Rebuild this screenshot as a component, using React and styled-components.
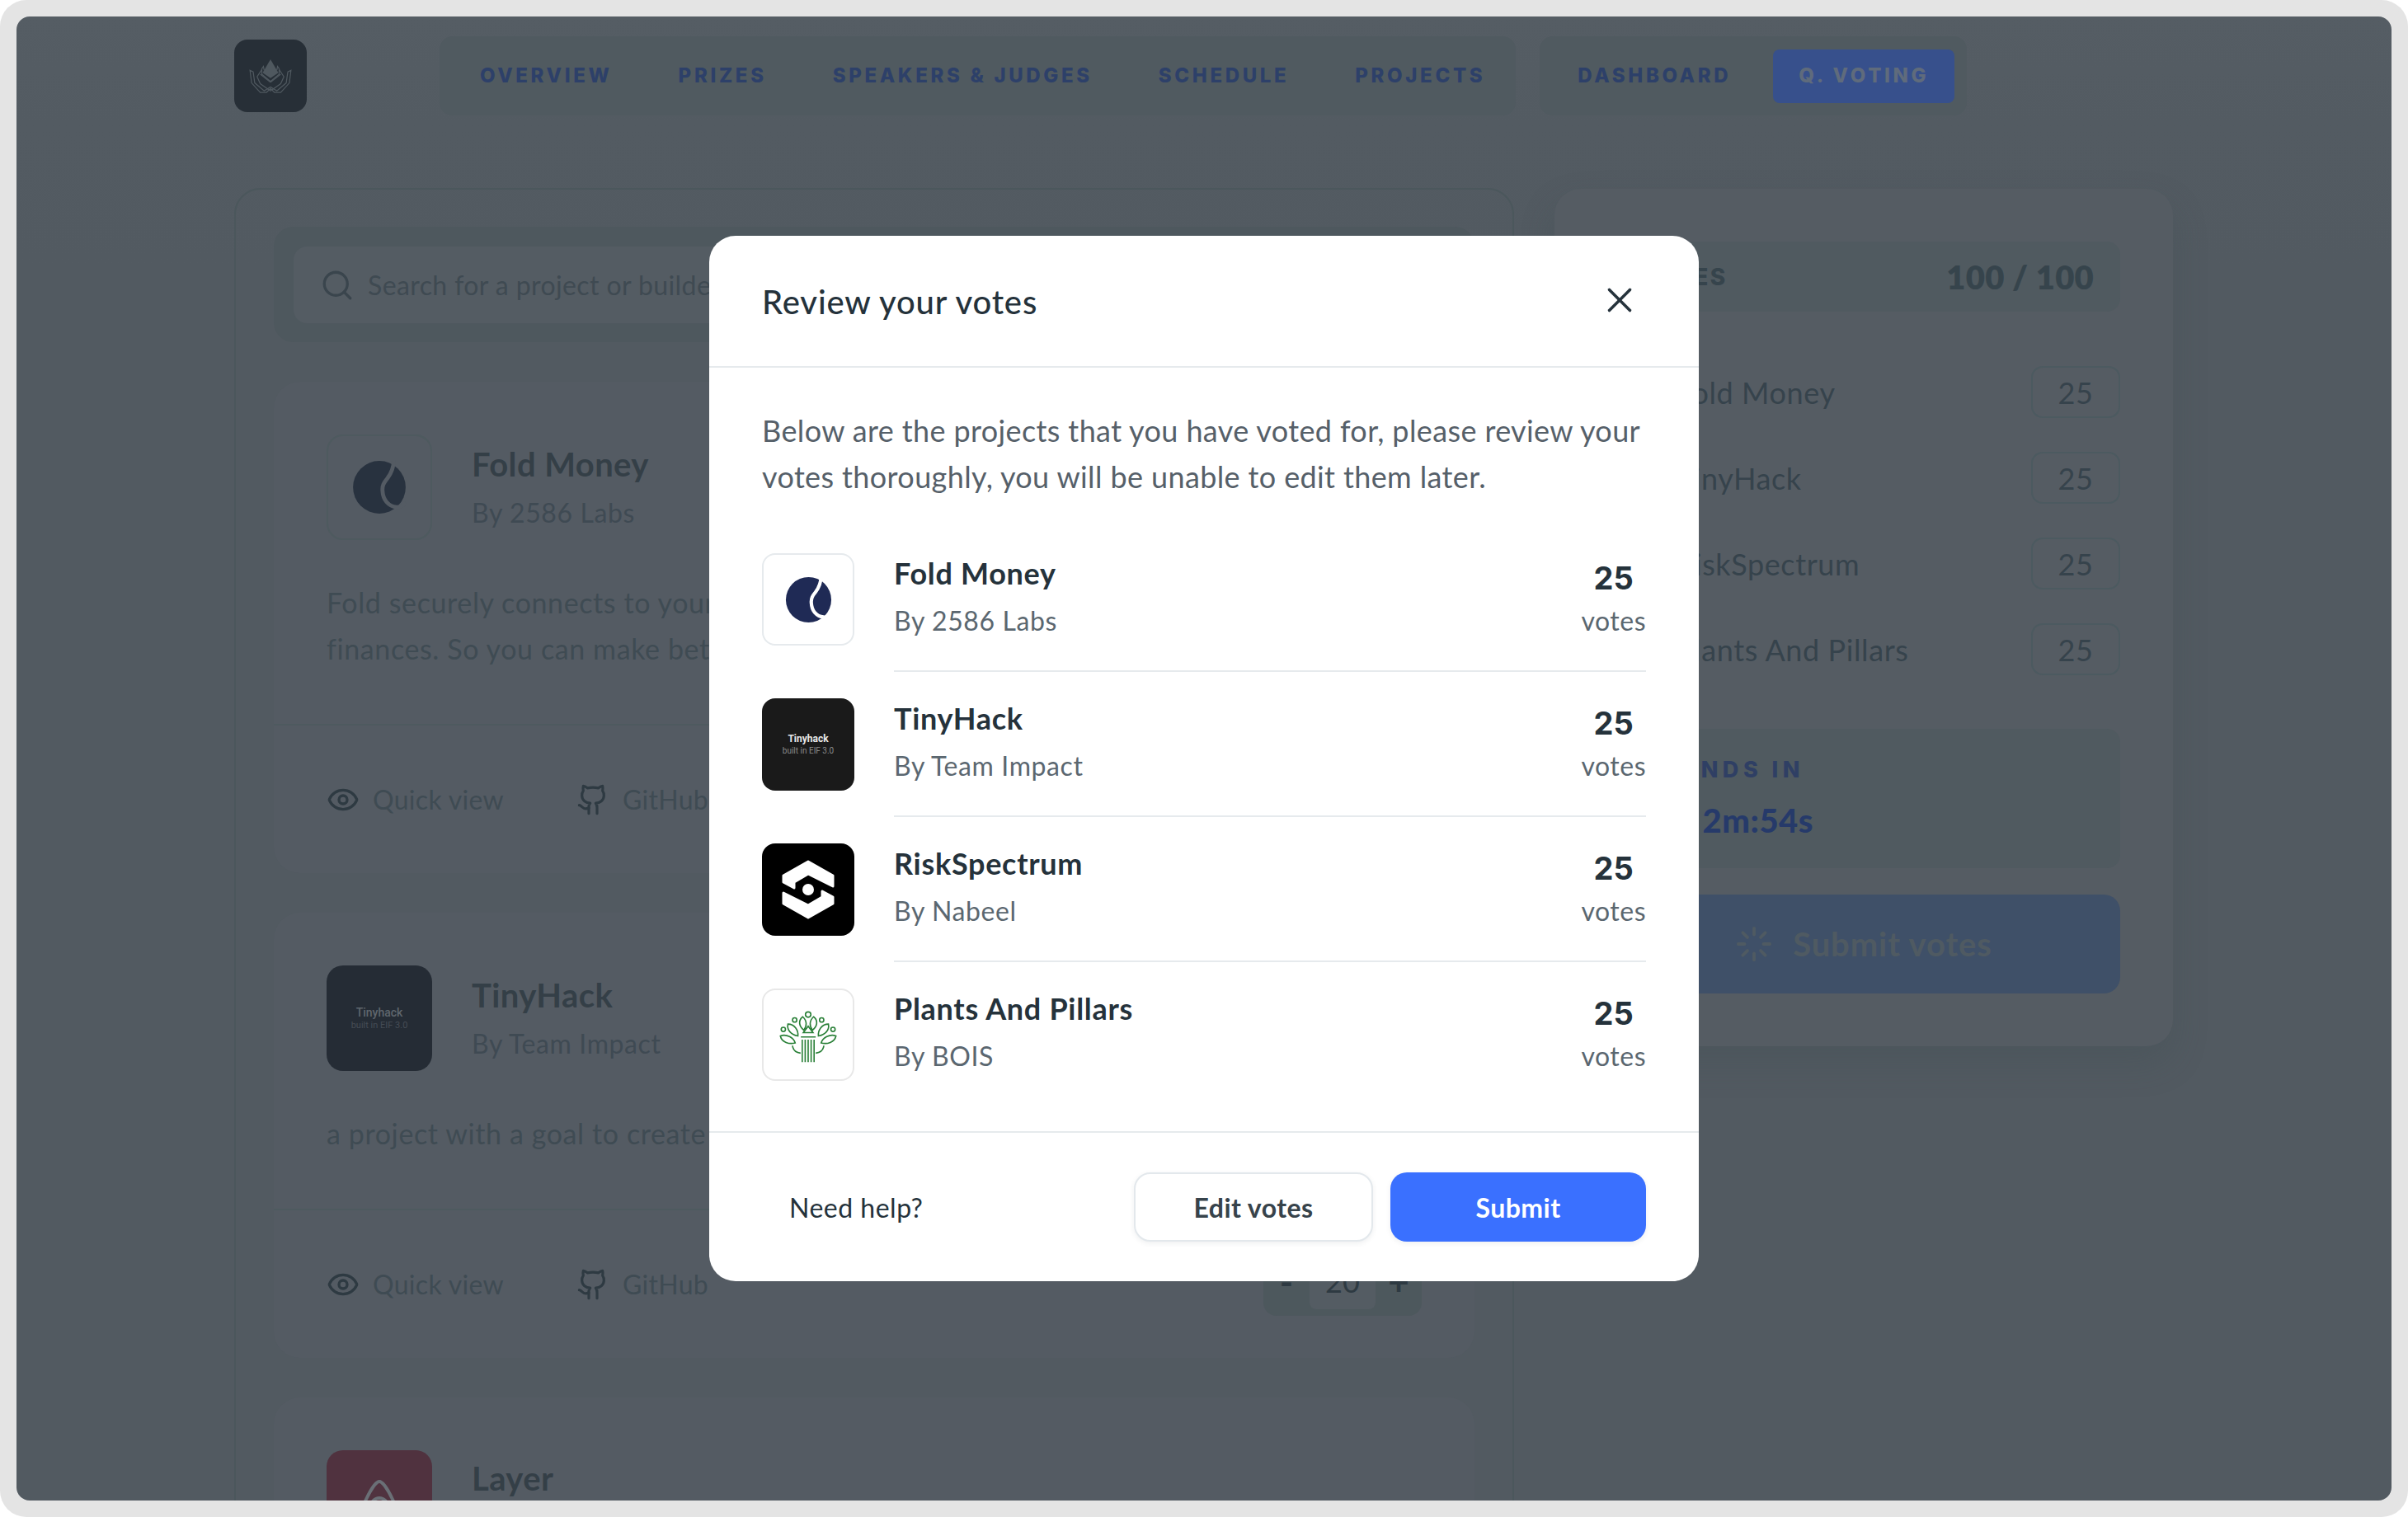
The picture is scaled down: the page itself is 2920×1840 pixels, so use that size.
import React from "react";
import styled, { createGlobalStyle } from "styled-components";
import { Eye, Github, Search, X, Loader } from "lucide-react";

const FONT = `"Lato", "Noto Sans", sans-serif`;
const CAPS = `"Inter", "Liberation Sans", sans-serif`;

const Global = createGlobalStyle`
  html, body { margin: 0; padding: 0; background: #fff; }
  body { font-family: ${FONT}; }
  * { box-sizing: border-box; }
`;

const Frame = styled.div`
  position: relative;
  width: 2920px;
  height: 1840px;
  padding: 20px;
  background: #e4e4e4;
  border-radius: 32px;
  overflow: hidden;
`;
const Screen = styled.div`
  width: 2880px;
  height: 1800px;
  border-radius: 16px;
  overflow: hidden;
  background: linear-gradient(#555d64 0, #535b62 130px, #525a61 300px);
`;
const Header = styled.header`
  display: flex;
  align-items: center;
  padding: 24px 0 0 264px;
  height: 120px;
`;
const Brand = styled.div`
  width: 88px;
  height: 88px;
  border-radius: 16px;
  background: #272f37;
  display: flex;
  align-items: center;
  justify-content: center;
  margin-right: 161px;
`;
const NavGroup = styled.nav`
  display: flex;
  align-items: center;
  height: 96px;
  gap: ${(p) => p.$gap}px;
  padding: 0 ${(p) => p.$right}px 0 ${(p) => p.$left}px;
  margin-right: ${(p) => p.$after || 0}px;
  background: #505a60;
  border-radius: 16px;
`;
const NavLink = styled.span`
  font-family: ${CAPS};
  font-weight: 800;
  font-size: 24px;
  letter-spacing: 3.65px;
  color: #2d4069;
  line-height: 32px;
`;
const NavActive = styled(NavLink)`
  display: flex;
  align-items: center;
  height: 65px;
  padding: 0 31px;
  border-radius: 8px;
  background: #37508c;
  color: #5f6b7c;
`;
const Columns = styled.div`
  display: flex;
  align-items: flex-start;
  padding: 88px 0 0 264px;
  gap: 49px;
`;
const Main = styled.main`
  width: 1552px;
  height: 1700px;
  padding: 45px 46px 0;
  border: 2px solid #4b575c;
  border-radius: 32px;
  display: flex;
  flex-direction: column;
  gap: 48px;
`;
const SearchWrap = styled.div`
  height: 140px;
  padding: 24px;
  background: #4e585e;
  border-radius: 24px;
`;
const SearchInput = styled.div`
  height: 93px;
  display: flex;
  align-items: center;
  gap: 16px;
  padding-left: 32px;
  background: #545c63;
  border-radius: 16px;
  color: #3f4a52;
  font-size: 32px;
  letter-spacing: 0.4px;
`;
const Card = styled.article`
  flex: none;
  width: 1456px;
  background: #545b63;
  border-radius: 32px;
`;
const CardBody = styled.div`
  padding: 64px 64px 63px;
`;
const CardHead = styled.div`
  display: flex;
  align-items: ${(p) => (p.$top ? "flex-start" : "center")};
  gap: 48px;
`;
const CardLogo = styled.div`
  width: 128px;
  height: 128px;
  border-radius: 20px;
  display: flex;
  align-items: center;
  justify-content: center;
  flex-direction: column;
  background: ${(p) => p.$bg || "transparent"};
  border: 2px solid ${(p) => p.$border || "transparent"};
  font-family: "Roboto", sans-serif;
`;
const CardInfo = styled.div`
  padding-top: ${(p) => p.$pad || 0}px;
`;
const CardName = styled.h3`
  margin: 0;
  font-size: 40px;
  font-weight: 700;
  line-height: 52px;
  color: #343f47;
  letter-spacing: 0.4px;
`;
const CardBy = styled.div`
  margin-top: 10px;
  font-size: 32px;
  line-height: 46px;
  color: #3f4a53;
  letter-spacing: 0.6px;
`;
const CardDesc = styled.p`
  margin: 48px 0 0;
  font-size: 34px;
  line-height: 56px;
  color: #3f4b53;
  letter-spacing: 0.6px;
  white-space: nowrap;
`;
const CardFoot = styled.div`
  height: 181px;
  display: flex;
  align-items: center;
  padding: 0 64px;
  border-top: 2px solid #4e5a5f;
`;
const FootAction = styled.span`
  display: flex;
  align-items: center;
  gap: 16px;
  margin-right: 88px;
  font-size: 32px;
  letter-spacing: 0.3px;
  color: #3f4b53;
  svg { color: #2e3a42; }
`;
const Stepper = styled.div`
  margin-left: auto;
  width: 192px;
  height: 76px;
  display: flex;
  justify-content: space-between;
  padding: 0 0 8px;
  background: #4d585d;
  border-radius: 16px;
  font-size: 36px;
  color: #2e3a42;
`;
const StepBtn = styled.span`
  width: 56px;
  display: flex;
  align-items: center;
  justify-content: center;
  font-size: 44px;
  font-weight: 700;
`;
const StepValue = styled.span`
  width: 80px;
  display: flex;
  align-items: center;
  justify-content: center;
  background: #545c63;
  border-radius: 8px;
`;
const LogoLabel = styled.span`
  font-size: ${(p) => p.$size}px;
  font-weight: ${(p) => p.$weight};
  color: ${(p) => p.$color};
  line-height: ${(p) => p.$size + 3}px;
  white-space: nowrap;
`;

const Side = styled.aside`
  width: 750px;
  margin-top: 1px;
  padding: 64px;
  background: #555c63;
  border-radius: 32px;
  box-shadow: 0 20px 40px rgba(60, 75, 80, 0.25);
`;
const TotalBox = styled.div`
  height: 85px;
  padding: 0 32px 0 38px;
  display: flex;
  align-items: center;
  justify-content: space-between;
  background: #505a60;
  border-radius: 16px;
`;
const TotalLabel = styled.span`
  font-family: ${CAPS};
  font-weight: 800;
  font-size: 28px;
  letter-spacing: 2.4px;
  color: #36444c;
`;
const TotalValue = styled.span`
  font-weight: 800;
  font-size: 40px;
  color: #36444c;
  letter-spacing: 0.2px;
`;
const VoteList = styled.div`
  margin-top: 66px;
  display: flex;
  flex-direction: column;
  gap: 41px;
`;
const VoteRow = styled.div`
  height: 63px;
  display: flex;
  align-items: center;
  justify-content: space-between;
  padding-left: 83px;
  font-size: 36px;
  color: #36434c;
  letter-spacing: 0.6px;
`;
const VoteBox = styled.span`
  width: 108px;
  height: 63px;
  display: flex;
  align-items: center;
  justify-content: center;
  border: 2px solid #4c5a60;
  border-radius: 14px;
  color: #36434c;
`;
const Timer = styled.div`
  margin-top: 65px;
  height: 169px;
  padding: 32px 372px 0 0;
  display: flex;
  flex-direction: column;
  align-items: flex-end;
  background: #505a60;
  border-radius: 16px;
`;
const TimerLabel = styled.div`
  margin-right: 11px;
  font-family: ${CAPS};
  font-weight: 800;
  font-size: 27px;
  line-height: 36px;
  letter-spacing: 5.5px;
  color: #2f3f64;
  white-space: nowrap;
`;
const TimerValue = styled.div`
  margin-top: 18px;
  font-weight: 900;
  font-size: 40px;
  line-height: 50px;
  letter-spacing: 0.5px;
  color: #263a6a;
  white-space: pre;
`;
const SubmitAll = styled.div`
  margin-top: 32px;
  height: 120px;
  display: flex;
  align-items: center;
  justify-content: center;
  gap: 24px;
  background: #3f5068;
  border-radius: 20px;
  font-weight: 700;
  font-size: 40px;
  letter-spacing: 0.9px;
  color: #4f5a62;
`;

const Overlay = styled.div`
  position: absolute;
  inset: 0;
  display: flex;
  align-items: center;
  justify-content: center;
`;
const Modal = styled.section`
  width: 1200px;
  height: 1268px;
  background: #fff;
  border-radius: 32px;
  display: flex;
  flex-direction: column;
  overflow: hidden;
`;
const ModalHead = styled.div`
  height: 160px;
  flex: none;
  display: flex;
  align-items: center;
  justify-content: space-between;
  padding: 0 71px 0 64px;
  border-bottom: 2px solid #e6eaed;
`;
const ModalTitle = styled.h2`
  margin: 2px 0 0;
  font-size: 40px;
  font-weight: 500;
  line-height: 56px;
  letter-spacing: 0.85px;
  color: #25323b;
`;
const CloseBtn = styled.span`
  display: flex;
  margin-top: -2px;
  color: #25323b;
`;
const ModalBody = styled.div`
  flex: 1;
  min-height: 0;
  padding: 48px 64px 0;
`;
const Intro = styled.p`
  margin: 0 0 65px;
  font-size: 36px;
  line-height: 56px;
  letter-spacing: 0.38px;
  color: #566069;
  white-space: nowrap;
`;
const Row = styled.div`
  display: flex;
  gap: 48px;
  margin-bottom: 32px;
`;
const RowLogo = styled.div`
  flex: none;
  width: 112px;
  height: 112px;
  border-radius: 16px;
  display: flex;
  flex-direction: column;
  align-items: center;
  justify-content: center;
  background: ${(p) => p.$bg || "#fff"};
  border: 2px solid ${(p) => p.$border || "transparent"};
  overflow: hidden;
  font-family: "Roboto", sans-serif;
`;
const RowMain = styled.div`
  flex: 1;
  height: 144px;
  display: flex;
  justify-content: space-between;
  border-bottom: 2px solid ${(p) => (p.$last ? "transparent" : "#e6eaed")};
`;
const RowInfo = styled.div`
  padding-top: 2px;
`;
const RowName = styled.div`
  font-size: 36px;
  font-weight: 700;
  line-height: 44px;
  letter-spacing: 0.7px;
  color: #25323b;
`;
const RowBy = styled.div`
  margin-top: 14px;
  font-size: 32px;
  line-height: 44px;
  letter-spacing: 0.6px;
  color: #5b6770;
`;
const RowVotes = styled.div`
  padding-top: 8px;
  text-align: center;
`;
const VoteCount = styled.div`
  font-family: ${CAPS};
  font-size: 38px;
  font-weight: 700;
  line-height: 44px;
  color: #25323b;
`;
const VoteUnit = styled.div`
  margin-top: 8px;
  font-size: 32px;
  line-height: 44px;
  letter-spacing: 0.5px;
  color: #5b6770;
`;
const ModalFoot = styled.div`
  flex: none;
  height: 182px;
  display: flex;
  align-items: center;
  padding: 0 64px 0 97px;
  border-top: 2px solid #e6eaed;
`;
const HelpText = styled.span`
  margin-right: auto;
  font-size: 32px;
  letter-spacing: 0.5px;
  color: #25323b;
`;
const Button = styled.button`
  height: 84px;
  width: ${(p) => p.$w}px;
  margin-left: ${(p) => p.$ml || 0}px;
  border-radius: 20px;
  font-family: ${FONT};
  font-size: 32px;
  font-weight: 700;
  letter-spacing: 0.45px;
  border: ${(p) => (p.$primary ? "none" : "2px solid #e3e8ec")};
  color: ${(p) => (p.$primary ? "#fff" : "#37434b")};
  background: ${(p) => (p.$primary ? "#3a70ff" : "#fff")};
  box-shadow: 0 2px 6px rgba(40, 50, 60, 0.08);
`;

const LotusMark = () => (
  <svg width="54" height="42" viewBox="0 0 56 44" fill="none" stroke="#4f585f" strokeWidth="1.3">
    <path d="M28 1 L38 18 L28 25 L18 18 Z" fill="#4f585f" stroke="none" />
    <path d="M28 29 L17 20 L17 13 L19 10 L20 15 M28 29 L39 20 L39 13 L37 10 L36 15" />
    <path d="M28 30 L15 20 M28 30 L41 20" />
    <path d="M17 14 L11 23 L15 32 L28 41 L41 32 L45 23 L39 14" />
    <path d="M2 15 L6 17 L8 31 L20 41 L28 36 L36 41 L48 31 L50 17 L54 15 L52 31 L41 43 L33 43 L28 38 L23 43 L15 43 L4 31 Z" />
  </svg>
);

const FoldMark = ({ size, color, gap }) => (
  <svg width={size} height={size} viewBox="0 0 60 60">
    <circle cx="30" cy="30" r="29" fill={color} />
    <path
      d="M46 -1 C46 9 42 16 39 20 C35 25 33 28 33.5 34 C34 44 40 51 49 52 C52 52.5 55 51 59 47"
      fill="none"
      stroke={gap}
      strokeWidth="4.4"
    />
  </svg>
);

const RiskMark = () => (
  <svg width="64" height="72" viewBox="-32 -36 64 72">
    <g fill="#fff" stroke="#fff" strokeWidth="3" strokeLinejoin="round">
      <path d="M0 -34 L30 -17 L30 -4 L0 -19 L-17 -9 L-17 -2 L-30 -9 L-30 -17 Z" />
      <path d="M0 34 L-30 17 L-30 4 L0 19 L17 9 L17 2 L30 9 L30 17 Z" />
    </g>
    <circle r="7" fill="#fff" />
  </svg>
);

const PlantMark = () => (
  <svg width="108" height="108" viewBox="75 58 330 327" fill="none" stroke="#2a8038" strokeWidth="5">
    <circle cx="240" cy="147" r="10" />
    <circle cx="190" cy="167" r="8" />
    <circle cx="290" cy="167" r="8" />
    <circle cx="148" cy="202" r="8" />
    <circle cx="332" cy="202" r="8" />
    <path d="M220 155 C202 170 206 190 224 205 C236 190 236 170 220 155 Z" />
    <path d="M260 155 C278 170 274 190 256 205 C244 190 244 170 260 155 Z" />
    <path d="M165 182 C160 205 178 222 202 226 C204 205 190 182 165 182 Z" />
    <path d="M315 182 C320 205 302 222 278 226 C276 205 290 182 315 182 Z" />
    <path d="M137 226 C142 250 170 258 192 252 C186 232 160 218 137 226 Z" />
    <path d="M343 226 C338 250 310 258 288 252 C294 232 320 218 343 226 Z" />
    <path d="M182 262 C184 280 196 288 212 290 M298 262 C296 280 284 288 268 290" />
    <path d="M240 190 L222 214 L258 214 Z" />
    <path d="M213 230 L268 230" />
    <path d="M218 240 V323 M229 240 V323 M240 240 V323 M251 240 V323 M262 240 V323" />
  </svg>
);

const LayerMark = () => (
  <svg width="64" height="64" viewBox="0 0 64 64" fill="none" stroke="#6a6f76" strokeWidth="4">
    <path d="M32 6 C24 6 6 46 8 54 C12 64 24 58 32 48 C40 58 52 64 56 54 C58 46 40 6 32 6 Z" />
    <circle cx="32" cy="36" r="10" />
  </svg>
);

const Tiny = ({ big, small }) => (
  <>
    <LogoLabel $size={big} $weight={700} $color="#e8e8e8">Tinyhack</LogoLabel>
    <LogoLabel $size={small} $weight={400} $color="#8a8a8a">built in EIF 3.0</LogoLabel>
  </>
);

const projects = [
  { name: "Fold Money", by: "By 2586 Labs", logo: <FoldMark size={57} color="#1f2a55" gap="#fff" />, border: "#e6eaed" },
  { name: "TinyHack", by: "By Team Impact", logo: <Tiny big={12} small={10} />, bg: "#1a1a1a" },
  { name: "RiskSpectrum", by: "By Nabeel", logo: <RiskMark />, bg: "#000" },
  { name: "Plants And Pillars", by: "By BOIS", logo: <PlantMark />, border: "#e8e8e8" },
];

const Foot = () => (
  <CardFoot>
    <FootAction><Eye size={40} strokeWidth={2} />Quick view</FootAction>
    <FootAction><Github size={40} strokeWidth={1.9} />GitHub</FootAction>
    <Stepper>
      <StepBtn>-</StepBtn>
      <StepValue>20</StepValue>
      <StepBtn>+</StepBtn>
    </Stepper>
  </CardFoot>
);

export default function App() {
  return (
    <Frame>
      <Global />
      <Screen>
        <Header>
          <Brand><LotusMark /></Brand>
          <NavGroup $gap={80} $left={49} $right={37} $after={29}>
            <NavLink>OVERVIEW</NavLink>
            <NavLink>PRIZES</NavLink>
            <NavLink>SPEAKERS &amp; JUDGES</NavLink>
            <NavLink>SCHEDULE</NavLink>
            <NavLink>PROJECTS</NavLink>
          </NavGroup>
          <NavGroup $gap={51} $left={46} $right={15}>
            <NavLink>DASHBOARD</NavLink>
            <NavActive>Q. VOTING</NavActive>
          </NavGroup>
        </Header>
        <Columns>
          <Main>
            <SearchWrap>
              <SearchInput>
                <Search size={42} strokeWidth={1.9} color="#3a454d" />
                Search for a project or builder
              </SearchInput>
            </SearchWrap>
            <Card>
              <CardBody>
                <CardHead>
                  <CardLogo $border="#4e5a5f"><FoldMark size={66} color="#28323f" gap="#545b63" /></CardLogo>
                  <CardInfo>
                    <CardName>Fold Money</CardName>
                    <CardBy>By 2586 Labs</CardBy>
                  </CardInfo>
                </CardHead>
                <CardDesc>
                  Fold securely connects to your bank accounts and tracks your<br />
                  finances. So you can make better decisions with your money.
                </CardDesc>
              </CardBody>
              <Foot />
            </Card>
            <Card>
              <CardBody>
                <CardHead>
                  <CardLogo $bg="#252c35">
                    <LogoLabel $size={14} $weight={500} $color="#5f666d">Tinyhack</LogoLabel>
                    <LogoLabel $size={11} $weight={400} $color="#464d55">built in EIF 3.0</LogoLabel>
                  </CardLogo>
                  <CardInfo>
                    <CardName>TinyHack</CardName>
                    <CardBy>By Team Impact</CardBy>
                  </CardInfo>
                </CardHead>
                <CardDesc>a project with a goal to create a tiny hackable device</CardDesc>
              </CardBody>
              <Foot />
            </Card>
            <Card>
              <CardBody>
                <CardHead $top>
                  <CardLogo $bg="#50323f"><LayerMark /></CardLogo>
                  <CardInfo $pad={8}>
                    <CardName>Layer</CardName>
                  </CardInfo>
                </CardHead>
              </CardBody>
            </Card>
          </Main>
          <Side>
            <TotalBox>
              <TotalLabel>VOTES</TotalLabel>
              <TotalValue>100 / 100</TotalValue>
            </TotalBox>
            <VoteList>
              {projects.map((p) => (
                <VoteRow key={p.name}>
                  {p.name}
                  <VoteBox>25</VoteBox>
                </VoteRow>
              ))}
            </VoteList>
            <Timer>
              <TimerLabel>VOTING ENDS IN</TimerLabel>
              <TimerValue>{"1d  2m:54s"}</TimerValue>
            </Timer>
            <SubmitAll>
              <Loader size={46} strokeWidth={2} />
              Submit votes
            </SubmitAll>
          </Side>
        </Columns>
      </Screen>
      <Overlay>
        <Modal>
          <ModalHead>
            <ModalTitle>Review your votes</ModalTitle>
            <CloseBtn><X size={50} strokeWidth={1.7} /></CloseBtn>
          </ModalHead>
          <ModalBody>
            <Intro>
              Below are the projects that you have voted for, please review your<br />
              votes thoroughly, you will be unable to edit them later.
            </Intro>
            {projects.map((p, i) => (
              <Row key={p.name}>
                <RowLogo $bg={p.bg} $border={p.border}>{p.logo}</RowLogo>
                <RowMain $last={i === projects.length - 1}>
                  <RowInfo>
                    <RowName>{p.name}</RowName>
                    <RowBy>{p.by}</RowBy>
                  </RowInfo>
                  <RowVotes>
                    <VoteCount>25</VoteCount>
                    <VoteUnit>votes</VoteUnit>
                  </RowVotes>
                </RowMain>
              </Row>
            ))}
          </ModalBody>
          <ModalFoot>
            <HelpText>Need help?</HelpText>
            <Button $w={290}>Edit votes</Button>
            <Button $w={310} $ml={21} $primary>Submit</Button>
          </ModalFoot>
        </Modal>
      </Overlay>
    </Frame>
  );
}
